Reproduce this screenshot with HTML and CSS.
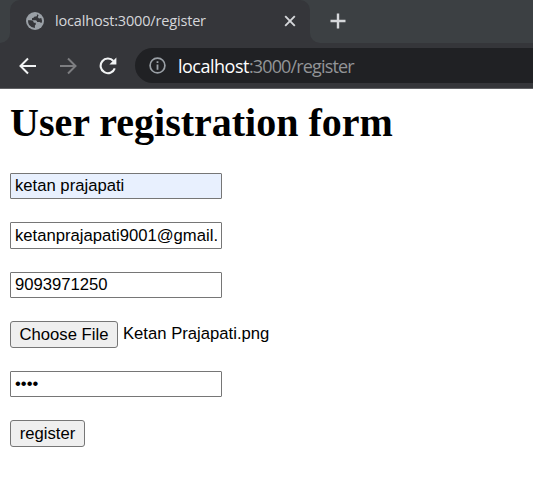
FILE: index.html
```html
<!DOCTYPE html>
<html lang="en">
<head>
<meta charset="utf-8">
<title>localhost:3000/register</title>
<link rel="stylesheet" href="styles.css">
</head>
<body>
<header class="browser">
  <div class="tabstrip">
    <div class="strip-left"></div>
    <div class="tab-slot">
      <div class="tab">
        <svg class="globe" width="18" height="18" viewBox="0 0 18 18"><circle cx="9" cy="9" r="9" fill="#9aa0a6"/><path d="M10.800 2.200Q11.600 3.700 10.300 4.400H8.800Q7.900 4.600 7.900 5.500L6 6.200V8.300H9.600Q11 8.500 11.200 10H13.600Q14.200 10.800 15.500 10.900Q16.600 8.500 15.300 5.900L13 6.600 11.800 5.300 12.600 2.900ZM2 8.200H5.200Q7.600 8.500 7.900 10.700H9.700Q10.300 12.600 8.900 13.500V16Q5.200 15.700 3.200 13Q1.900 11 2 8.200Z" fill="#35363a"/></svg>
        <span class="tab-title">localhost:3000/register</span>
        <svg class="close" width="12" height="12" viewBox="0 0 12 12"><path d="M1.200 1.200 10.800 10.800M10.800 1.200 1.200 10.800" stroke="#d5d7da" stroke-width="1.900"/></svg>
      </div>
    </div>
    <div class="strip-rest">
      <svg width="16" height="16" viewBox="0 0 16 16"><path d="M8 .5V15.500M.5 8H15.500" stroke="#d5d7da" stroke-width="2.400"/></svg>
    </div>
  </div>
  <div class="toolbar">
    <svg class="back" width="18" height="18" viewBox="0 0 18 18"><path d="M17 9H2M9 1.500 1.500 9 9 16.500" fill="none" stroke="#f1f3f4" stroke-width="2"/></svg>
    <svg class="forward" width="18" height="18" viewBox="0 0 18 18"><path d="M1 9H16M9 1.500 16.500 9 9 16.500" fill="none" stroke="#7d7e81" stroke-width="2"/></svg>
    <svg class="reload" width="18" height="18" viewBox="0 0 18 18"><path d="M15.800 11.400A7.300 7.300 0 1 1 14.400 4" fill="none" stroke="#f1f3f4" stroke-width="2.100"/><path d="M17.400.6V7.600H10.400Z" fill="#f1f3f4"/></svg>
    <div class="omnibox">
      <svg class="info" width="17" height="17" viewBox="0 0 17 17"><circle cx="8.500" cy="8.500" r="7.400" fill="none" stroke="#9aa0a6" stroke-width="1.700"/><path d="M8.500 7.500V12.700M8.500 4.300V6.100" stroke="#9aa0a6" stroke-width="1.800"/></svg>
      <span class="url"><span class="host">localhost</span>:3000/register</span>
    </div>
  </div>
</header>
<main class="page">
  <h1>User registration form</h1>
  <form class="form">
    <input class="field filled" type="text" value="ketan prajapati">
    <input class="field email" type="text" value="ketanprajapati9001@gmail.com">
    <input class="field" type="text" value="9093971250">
    <div class="file"><button class="btn choose" type="button">Choose File</button><span class="file-name">Ketan Prajapati.png</span></div>
    <input class="field" type="password" value="1234">
    <button class="btn submit" type="button">register</button>
  </form>
</main>
</body>
</html>
```
FILE: styles.css
```css
* { box-sizing: border-box; }
body { margin: 0; background: #fff; overflow: hidden; }
svg { display: block; flex: none; }
.browser {
  height: 89px;
  background: #35363a;
  border-bottom: 1px solid #606164;
  font-family: "Open Sans", "Noto Sans", sans-serif;
  overflow: hidden;
}
.tabstrip { display: flex; height: 43px; }
.strip-left { width: 10px; background: #3c4043; border-bottom-right-radius: 10px; }
.tab-slot { width: 300px; height: 43px; background: linear-gradient(#3c4043 12px, #35363a 12px); }
.tab {
  height: 43px;
  padding: 0 14px 1px 16px;
  display: flex;
  align-items: center;
  background: #35363a;
  border-radius: 10px 10px 0 0;
}
.tab-title { margin-left: 11px; padding-bottom: 2px; font-size: 14.5px; letter-spacing: -.17px; color: #d5d7da; white-space: nowrap; }
.close { margin-left: auto; }
.strip-rest {
  flex: 1;
  padding: 13px 0 0 20px;
  background: #3c4043;
  border-bottom-left-radius: 10px;
}
.toolbar { display: flex; align-items: center; height: 45px; padding-left: 19px; }
.forward { margin-left: 22px; }
.reload { margin-left: 22px; }
.omnibox {
  flex: 1;
  height: 35px;
  margin-left: 18px;
  padding-left: 14px;
  display: flex;
  align-items: center;
  background: #202124;
  border-radius: 18px 0 0 18px;
}
.url { margin-left: 12px; font-size: 18px; letter-spacing: -.85px; color: #929497; white-space: nowrap; }
.host { color: #fff; letter-spacing: -.5px; }
.page { padding: 11px 10px 0; }
h1 { margin: 0; font: bold 40px/46px "Liberation Serif", serif; color: #000; }
.form {
  display: grid;
  justify-items: start;
  grid-auto-rows: 27px;
  row-gap: 22.500px;
  margin-top: 26.500px;
  font-family: "Liberation Sans", sans-serif;
  font-size: 16.670px;
}
.field {
  width: 212px;
  height: 26.500px;
  margin: 0;
  padding: 1px 4px;
  border: 1px solid #767676;
  border-radius: 1px;
  background: #fff;
  color: #000;
  font: inherit;
  outline: 0;
}
.filled { background: #e8f0fe; }
.email { padding-top: 2px; }
.file { display: flex; align-items: center; }
.file-name { margin-left: 5px; line-height: 25px; padding-bottom: 2px; white-space: nowrap; }
.btn {
  height: 27px;
  margin: 0;
  padding: 0;
  border: 1px solid #767676;
  border-radius: 3px;
  background: #efefef;
  color: #000;
  font: inherit;
}
.choose { width: 108px; }
.submit { width: 75px; }
```
